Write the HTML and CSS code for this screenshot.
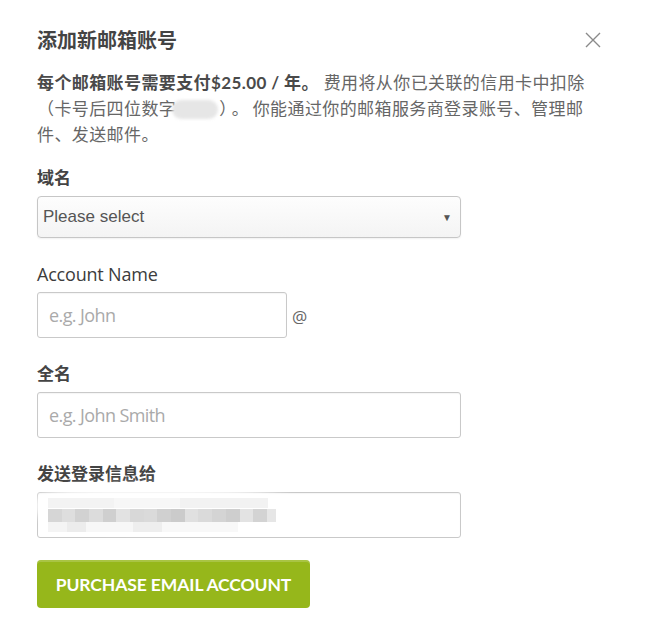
FILE: index.html
```html
<!DOCTYPE html>
<html lang="zh">
<head>
<meta charset="utf-8">
<title>添加新邮箱账号</title>
<link rel="stylesheet" href="styles.css">
</head>
<body>
<div class="modal">
  <div class="modal-header">
    <h1 class="modal-title">添加新邮箱账号</h1>
    <button class="close-btn" aria-label="关闭">
      <svg width="16" height="16" viewBox="0 0 16 16"><path d="M1 1L15 15M15 1L1 15" stroke="#8a8a8a" stroke-width="1.4" fill="none"/></svg>
    </button>
  </div>
  <p class="desc"><strong>每个邮箱账号需要支付$25.00 / 年。</strong> 费用将从你已关联的信用卡中扣除（卡号后四位数字<span class="blur-digits"></span><span class="punct">）。</span>你能通过你的邮箱服务商登录账号、管理邮件、发送邮件。</p>

  <div class="group">
    <label class="label">域名</label>
    <div class="select">
      <span>Please select</span>
      <span class="caret">▼</span>
    </div>
  </div>

  <div class="group">
    <label class="label label-en">Account Name</label>
    <div class="acct-row">
      <div class="input input-short"><span class="ph">e.g. John</span></div>
      <span class="at">@</span>
    </div>
  </div>

  <div class="group">
    <label class="label">全名</label>
    <div class="input"><span class="ph">e.g. John Smith</span></div>
  </div>

  <div class="group">
    <label class="label">发送登录信息给</label>
    <div class="input input-email">
      <span class="haze"></span>
      <span class="pix-top"></span>
      <span class="pix"></span>
      <span class="pix-low"></span>
    </div>
  </div>

  <button class="buy-btn">PURCHASE EMAIL ACCOUNT</button>
</div>
</body>
</html>
```

FILE: styles.css
```css
* { box-sizing: border-box; }
html, body { margin: 0; padding: 0; background: #fff; }
body {
  font-family: "Lato", "Noto Sans CJK SC", sans-serif;
  color: #555;
}
.modal {
  width: 649px;
  padding: 26px 48px 0 37px;
}
.modal-header {
  display: flex;
  justify-content: space-between;
  align-items: center;
  height: 28px;
}
.modal-title {
  margin: 0;
  font-size: 20px;
  line-height: 28px;
  font-weight: 700;
  color: #444;
  font-family: "Noto Sans CJK SC", sans-serif;
}
.close-btn {
  border: 0;
  background: transparent;
  padding: 0;
  margin: 0;
  width: 16px;
  height: 16px;
  display: flex;
}
.desc {
  width: 556px;
  margin: 16px 0 18px;
  font-size: 17px;
  line-height: 26px;
  letter-spacing: 0.4px;
  color: #666;
  font-family: "Lato", "Noto Sans CJK SC", sans-serif;
}
.desc strong {
  color: #4a4a4a;
  font-weight: 700;
}
.blur-digits {
  display: inline-block;
  width: 46px;
  height: 19px;
  margin: 0 0 0 -4px;
  vertical-align: -4px;
  border-radius: 10px;
  background: #e6e6e6;
  filter: blur(1.5px);
}
.punct {
  letter-spacing: 4px;
  margin-left: 1px;
}
.group {
  margin-bottom: 24px;
  width: 424px;
}
.label {
  display: block;
  font-size: 17px;
  line-height: 24px;
  font-weight: 700;
  color: #444;
  margin-bottom: 6px;
  font-family: "Open Sans", "Noto Sans CJK SC", sans-serif;
}
.label-en {
  font-weight: 400;
  font-size: 18px;
  color: #3c3c3c;
  letter-spacing: -0.2px;
}
.select {
  height: 42px;
  border: 1px solid #c6c6c6;
  border-radius: 4px;
  background: linear-gradient(#fdfdfd, #f4f4f4);
  box-shadow: 0 1px 2px rgba(0,0,0,0.06);
  display: flex;
  align-items: center;
  justify-content: space-between;
  padding: 0 8px 0 5px;
  font-family: "Liberation Sans", Arial, sans-serif;
  font-size: 17px;
  color: #555;
}
.caret {
  font-size: 10px;
  color: #555;
}
.input {
  height: 46px;
  border: 1px solid #c9c9c9;
  border-radius: 3px;
  background: #fff;
  box-shadow: inset 0 1px 1px rgba(0,0,0,0.04);
  display: flex;
  align-items: center;
  padding: 0 11px;
  font-family: "Open Sans", sans-serif;
  font-size: 18px;
}
.ph {
  color: #aaa;
  letter-spacing: -0.6px;
}
.acct-row {
  display: flex;
  align-items: center;
  gap: 5px;
}
.input-short {
  width: 250px;
}
.at {
  font-family: "Open Sans", sans-serif;
  font-size: 17px;
  color: #666;
  margin-top: 3px;
}
.input-email {
  position: relative;
  overflow: visible;
}
.haze {
  position: absolute;
  left: -4px;
  top: -8px;
  width: 270px;
  height: 46px;
  border-radius: 40% 60% 50% 50%;
  background: rgba(255,255,255,0.85);
  filter: blur(4px);
}
.pix-top {
  position: absolute;
  left: 10px;
  top: 5px;
  width: 220px;
  height: 10px;
  background: linear-gradient(90deg, #f3f3f3 0 30%, #f7f7f7 30% 60%, #f2f2f2 60% 100%);
}
.pix {
  position: absolute;
  left: 10px;
  top: 16px;
  width: 228px;
  height: 13px;
  background: linear-gradient(90deg,
    #d6d6d6 0 6%, #dedede 6% 12%, #d2d2d2 12% 18%, #dcdcdc 18% 24%,
    #cfcfcf 24% 30%, #e2e2e2 30% 36%, #d8d8d8 36% 42%, #dadada 42% 48%,
    #d0d0d0 48% 54%, #cbcbcb 54% 60%, #e0e0e0 60% 66%, #dadada 66% 72%,
    #d4d4d4 72% 78%, #cecece 78% 84%, #e3e3e3 84% 90%, #d3d3d3 90% 96%, #e6e6e6 96% 100%);
}
.pix-low {
  position: absolute;
  left: 10px;
  top: 29px;
  width: 190px;
  height: 10px;
  background: linear-gradient(90deg, #f4f4f4 0 10%, #ececec 10% 20%, #f7f7f7 20% 45%, #eeeeee 45% 60%, #f8f8f8 60% 100%);
}
.buy-btn {
  margin-top: -2px;
  width: 273px;
  height: 48px;
  border: 0;
  border-radius: 4px;
  background: #96b71b;
  box-shadow: inset 0 2px 0 rgba(255,255,255,0.18);
  color: #fff;
  font-family: "Lato", sans-serif;
  font-weight: 700;
  font-size: 17.5px;
  letter-spacing: -0.1px;
  padding: 0;
}
```
